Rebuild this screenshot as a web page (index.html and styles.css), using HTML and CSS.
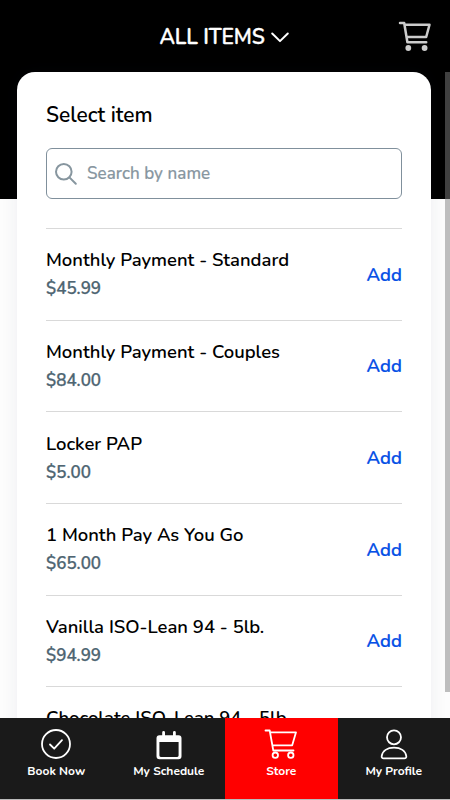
FILE: index.html
```html
<!DOCTYPE html>
<html lang="en">
<head>
<meta charset="utf-8">
<meta name="viewport" content="width=device-width, initial-scale=1">
<title>Store</title>
<link rel="stylesheet" href="styles.css">
</head>
<body>
<div class="app">
  <main class="screen">
    <header class="topbar">
      <button class="category"><span class="category-label">ALL ITEMS</span>
        <svg class="chevron" viewBox="0 0 18 11"><path d="M1.2 1.5 9 9.1 16.8 1.5"/></svg>
      </button>
      <button class="cart" aria-label="Cart">
        <svg viewBox="0 0 34 30"><path d="M2 2h4.200l3.200 19.200h18.800M6.700 3.700h24.800l-3.300 12.300H9"/><circle cx="10.300" cy="27" r="2.900"/><circle cx="26.600" cy="27" r="2.900"/></svg>
      </button>
    </header>
    <section class="card">
      <h1 class="title">Select item</h1>
      <label class="search">
        <svg viewBox="0 0 22 22"><circle cx="8.8" cy="8.8" r="7.8"/><path d="m14.4 14.4 6.4 6.4"/></svg>
        <span class="placeholder">Search by name</span>
      </label>
      <ul class="items">
        <li class="item"><div><p class="name">Monthly Payment - Standard</p><p class="price">$45.99</p></div><button class="add">Add</button></li>
        <li class="item"><div><p class="name">Monthly Payment - Couples</p><p class="price">$84.00</p></div><button class="add">Add</button></li>
        <li class="item"><div><p class="name">Locker PAP</p><p class="price">$5.00</p></div><button class="add">Add</button></li>
        <li class="item"><div><p class="name">1 Month Pay As You Go</p><p class="price">$65.00</p></div><button class="add">Add</button></li>
        <li class="item"><div><p class="name">Vanilla ISO-Lean 94 - 5lb.</p><p class="price">$94.99</p></div><button class="add">Add</button></li>
        <li class="item"><div><p class="name">Chocolate ISO-Lean 94 - 5lb.</p></div></li>
      </ul>
    </section>
    <div class="scrollbar"></div>
  </main>
  <nav class="tabs">
    <a class="tab"><svg viewBox="0 0 34 30"><circle cx="17" cy="15" r="14"/><path d="m11 15.5 4.2 4.2 7.8-8.6"/></svg><span>Book Now</span></a>
    <a class="tab"><svg viewBox="0 0.700 34 30"><path class="solid" fill-rule="evenodd" d="M10.2 4.2a1.4 1.4 0 0 1 2.8 0V7h8V4.2a1.4 1.4 0 0 1 2.8 0V7h2.700a3 3 0 0 1 3 3v18a3 3 0 0 1-3 3h-19a3 3 0 0 1-3-3V10a3 3 0 0 1 3-3h2.700zM7.400 13.700v13.500a1.400 1.400 0 0 0 1.400 1.400h16.400a1.400 1.400 0 0 0 1.400-1.400V13.700z"/></svg><span>My Schedule</span></a>
    <a class="tab active"><svg viewBox="0 0 34 30"><path d="M1.5 1.5h4.200l3.600 20h20.200M6.200 3.300H32l-3.800 13H8.500"/><circle cx="11.300" cy="26.200" r="2.700"/><circle cx="26.800" cy="26.200" r="2.700"/></svg><span>Store</span></a>
    <a class="tab"><svg viewBox="0 0 34 30"><circle cx="17" cy="8.300" r="7"/><path d="M6.700 29.300c-1.600 0-2.200-.8-2-2.200.8-5 5.500-8.400 12.300-8.400s11.500 3.400 12.300 8.400c.2 1.400-.4 2.200-2 2.200z"/></svg><span>My Profile</span></a>
  </nav>
</div>
</body>
</html>
```
FILE: styles.css
```css
* { box-sizing: border-box; }
body { margin: 0; background: #bbb; font-family: Nunito, "Open Sans", sans-serif; font-weight: 600; color: #000; }
button { border: 0; padding: 0; background: none; font: inherit; color: inherit; }
p, h1, ul { margin: 0; padding: 0; }
svg { fill: none; stroke: currentColor; stroke-width: 2; stroke-linecap: round; stroke-linejoin: round; flex: none; overflow: visible; }
.app { height: 800px; display: flex; flex-direction: column; padding-bottom: 1px; overflow: hidden; }
.screen { position: relative; height: 718px; overflow: hidden; background: linear-gradient(#000 199px, #fdfdfd 199px); }
.topbar { height: 72px; display: grid; grid-template-columns: 1fr auto 1fr; align-items: center; color: #fff; padding: 0 18px; }
.category { grid-column: 2; display: flex; align-items: center; gap: 6px; font-size: 21px; line-height: 28px; font-weight: 600; padding-top: 2px; margin-right: 2px; }
.category-label { width: 105px; white-space: nowrap; text-align: left; letter-spacing: -.1px; -webkit-text-stroke: .35px currentColor; }
.chevron { width: 18px; height: 11px; }
.cart { justify-self: end; width: 34px; height: 30px; color: #ccc; }
.cart svg { display: block; width: 34px; height: 30px; stroke-width: 2.5; }
.cart circle { fill: currentColor; stroke: none; }
.card { margin: 0 19px 0 17px; height: 740px; padding: 29px 29px 0; background: #fff; border-radius: 18px 18px 0 0; box-shadow: 0 0 17px rgba(40, 50, 90, .08); }
.title { font-size: 20.9px; line-height: 28px; font-weight: 600; white-space: nowrap; }
.search { display: flex; align-items: center; height: 51px; margin-top: 19px; padding-left: 8px; gap: 10px; border: 1px solid #80909c; border-radius: 6px; color: #87969f; font-size: 17px; font-weight: 500; letter-spacing: .06px; white-space: nowrap; }
.search svg { width: 22px; height: 22px; }
.placeholder { -webkit-text-stroke: .2px currentColor; }
.items { list-style: none; margin-top: 29px; }
.item { display: flex; align-items: center; justify-content: space-between; height: 91.67px; padding-top: 1px; border-top: 1px solid #d9d9d9; font-size: 18px; line-height: 28px; white-space: nowrap; }
.item:last-child { align-items: flex-start; padding-top: 17px; }
.name { font-size: 18.45px; }
.price { color: #4e6572; font-size: 17px; font-weight: 600; line-height: 29px; -webkit-text-stroke: .25px currentColor; }
.add { color: #0650e6; font-size: 18.5px; -webkit-text-stroke: .2px currentColor; }
.scrollbar { position: absolute; right: 0; top: 72px; width: 5px; height: 620px; background: rgba(128, 128, 128, .5); }
.tabs { display: grid; grid-template-columns: repeat(4, 1fr); height: 81px; background: #1a1a1a; color: #fff; }
.tab { display: flex; flex-direction: column; align-items: center; padding-top: 11px; gap: 5px; font-size: 12px; line-height: 14px; font-weight: 700; white-space: nowrap; }
.tab svg { width: 34px; height: 30px; stroke-width: 1.8; }
.solid { fill: currentColor; stroke: none; }
.active { background: #f00; }
```
